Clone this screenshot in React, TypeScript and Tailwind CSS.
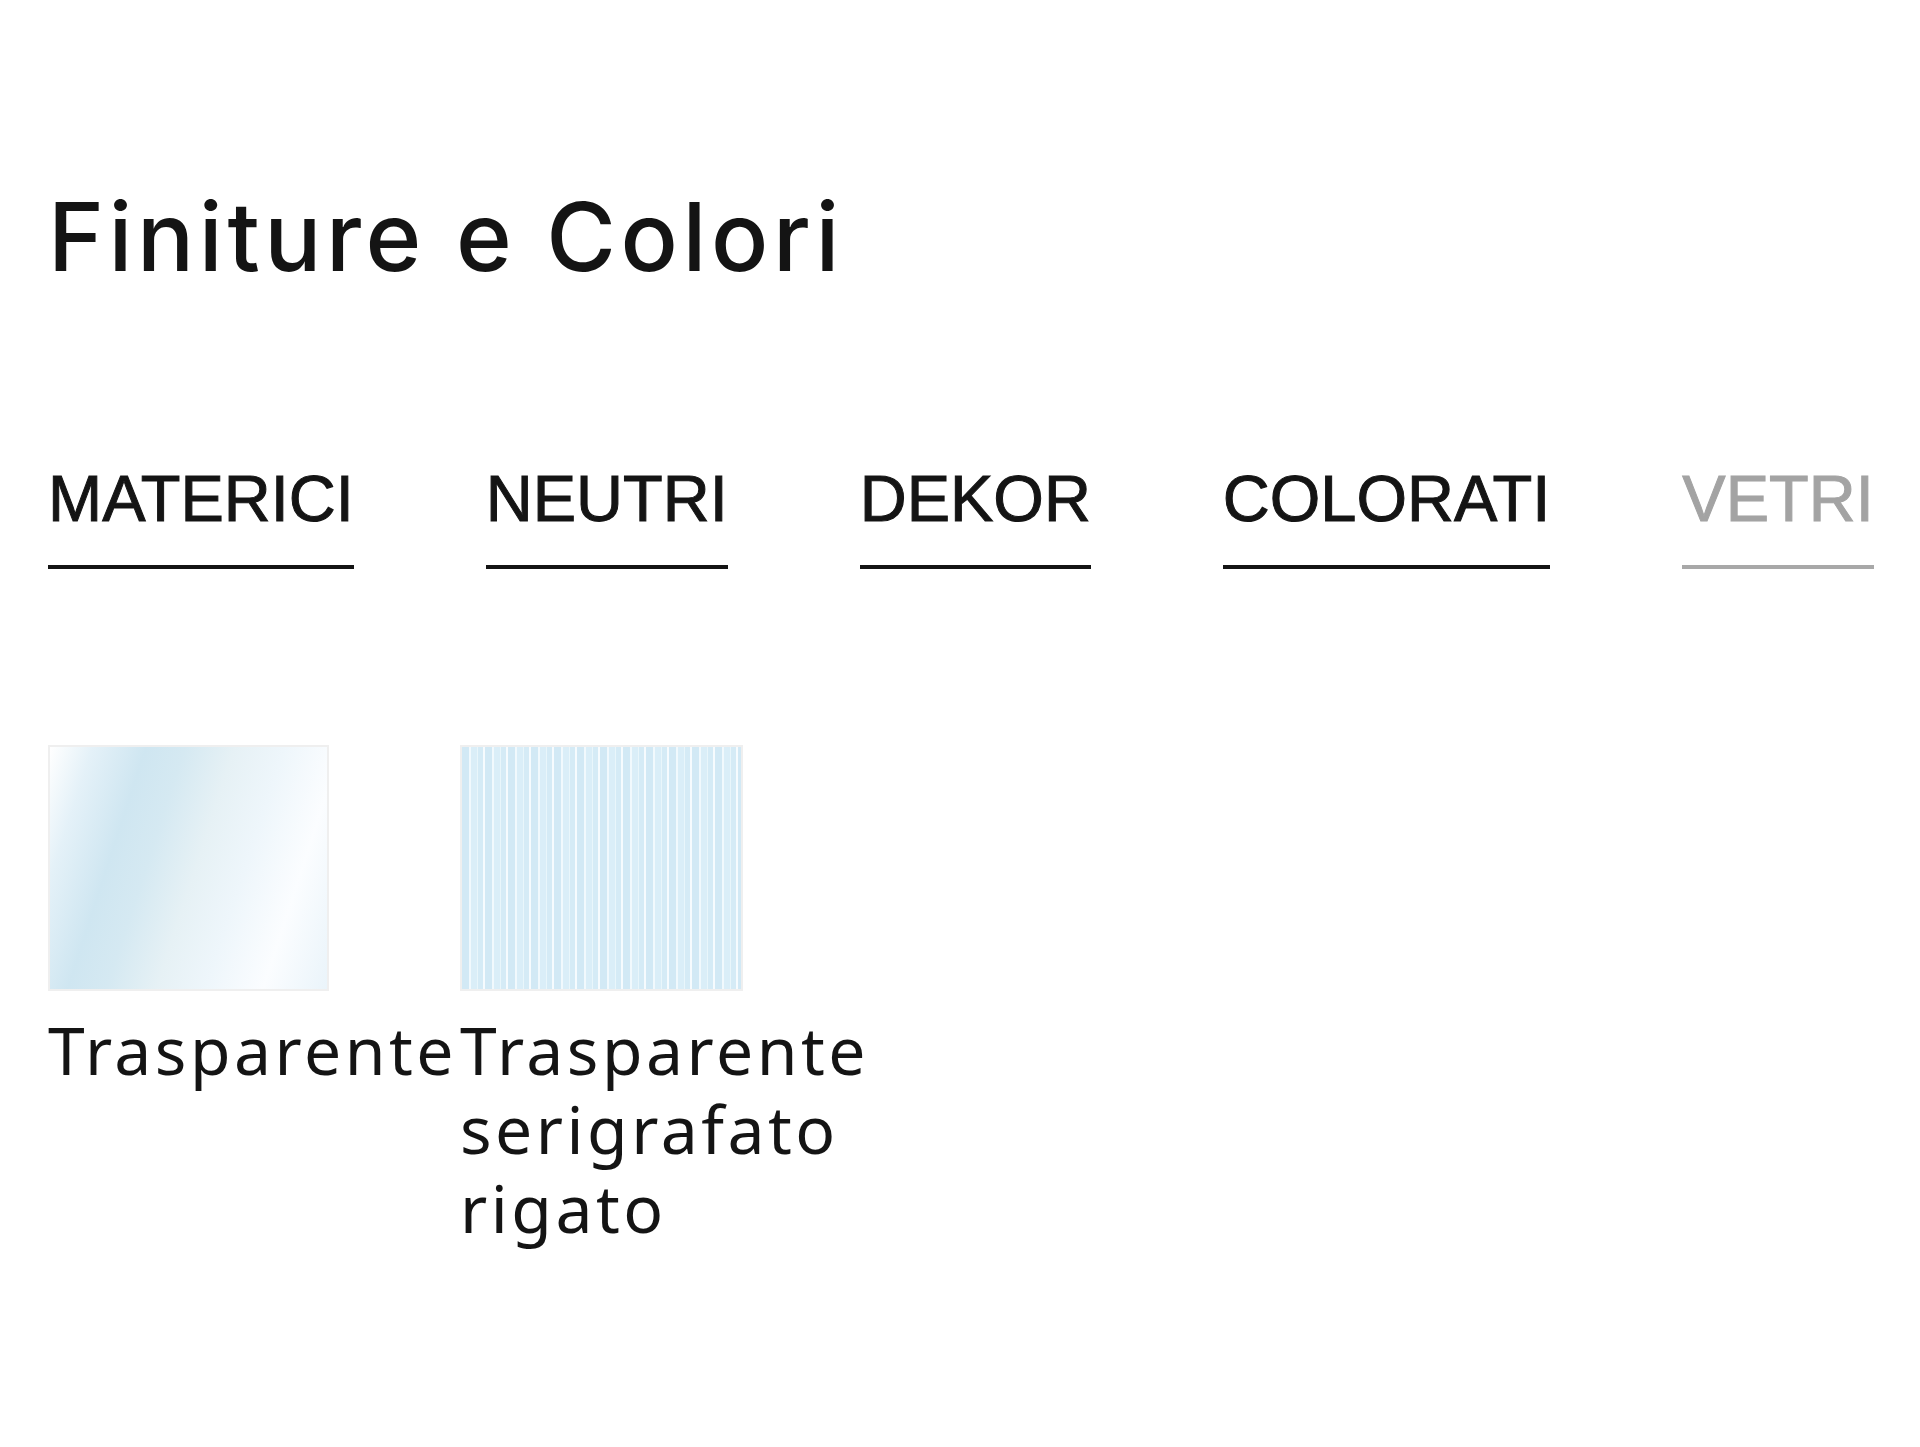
const tabs = [
  { label: "MATERICI", active: true },
  { label: "NEUTRI", active: true },
  { label: "DEKOR", active: true },
  { label: "COLORATI", active: true },
  { label: "VETRI", active: false },
];

export default function App() {
  return (
    <div className="min-h-[1447px] w-full bg-white pl-[48px] text-[#141414]">
      {/* Titolo */}
      <h1 className="pt-[189px] font-['Inter',sans-serif] text-[95px] leading-none font-medium tracking-[4.6px]">
        Finiture e Colori
      </h1>

      {/* Tabs */}
      <div className="mt-[182px] flex gap-[132px] font-['Liberation_Sans',Arial,sans-serif] text-[65px] leading-none [-webkit-text-stroke:1px_currentColor]">
        {tabs.map((t) => (
          <div
            key={t.label}
            className={
              t.active
                ? "border-b-4 border-[#141414] pb-[34px] text-[#141414]"
                : "border-b-4 border-[#a8a8a8] pb-[34px] text-[#a3a3a3]"
            }
          >
            {t.label}
          </div>
        ))}
      </div>

      {/* Vetri */}
      <div className="mt-[176px] flex gap-[8px] font-['Noto_Sans',sans-serif] text-[66px] leading-[79px] tracking-[3.5px]">
        <div className="w-[404px]">
          <div className="h-[246px] w-[281px] border-2 border-[#efefef] bg-[linear-gradient(108deg,#ffffff_0%,#e4f1f8_12%,#cfe6f1_27%,#d5e9f2_38%,#e6f1f5_52%,#eef6fb_66%,#fbfdff_82%,#eaf4fa_100%)]" />
          <p className="mt-[19px]">Trasparente</p>
        </div>
        <div className="w-[404px]">
          <div className="h-[246px] w-[283px] border-2 border-[#efefef] bg-[repeating-linear-gradient(90deg,#d2e9f5_0px,#d2e9f5_7px,#f1f9fd_7px,#f1f9fd_9px,#daeef8_9px,#daeef8_15px,#e9f6fb_15px,#e9f6fb_16px,#d5ebf6_16px,#d5ebf6_21px,#f6fbfe_21px,#f6fbfe_23px)]" />
          <p className="mt-[19px]">Trasparente serigrafato rigato</p>
        </div>
      </div>
    </div>
  );
}
